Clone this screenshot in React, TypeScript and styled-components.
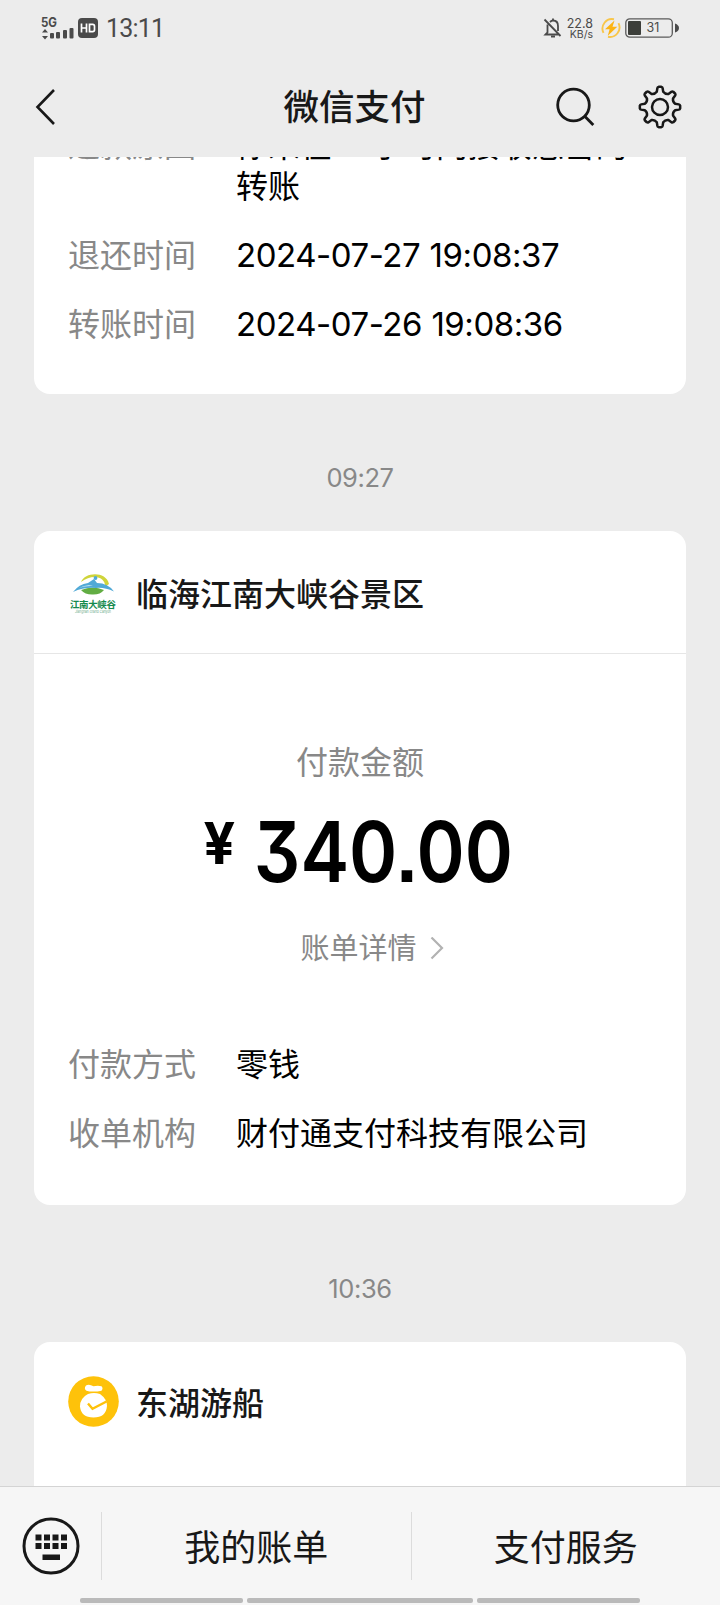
import React from "react";
import styled, { createGlobalStyle } from "styled-components";

const Global = createGlobalStyle`
  * { box-sizing: border-box; }
  html, body { margin: 0; padding: 0; background: #ececec; }
  body { font-family: Inter, "Noto Sans CJK SC", sans-serif; }
`;

const Screen = styled.div`
  width: 720px;
  height: 1605px;
  display: flex;
  flex-direction: column;
  overflow: hidden;
  background: #ececec;
`;

const StatusBar = styled.div`
  height: 56px;
  flex: none;
  display: flex;
  align-items: center;
  justify-content: space-between;
  padding: 0 40px 0 41px;
  color: #4a4a4a;
`;

const StatusGroup = styled.div`
  display: flex;
  align-items: center;
`;

const Clock = styled.span`
  margin: 2px 0 0 8px;
  font-family: Roboto, sans-serif;
  font-size: 25px;
  letter-spacing: -0.8px;
  line-height: 30px;
`;

const Speed = styled.div`
  display: flex;
  flex-direction: column;
  align-items: flex-end;
  width: 28px;
  margin: 1px 8px 0 2px;
  font: 12.5px/11px Inter, sans-serif;
  white-space: nowrap;
`;

const Unit = styled.span`
  font-size: 10.5px;
`;

const NavBar = styled.header`
  height: 101px;
  flex: none;
  display: grid;
  grid-template-columns: 200px 1fr 200px;
  align-items: center;
  padding: 0 38px 0 35px;
`;

const Title = styled.h1`
  margin: 2px 8px 0 0;
  text-align: center;
  font-size: 35.5px;
  line-height: 50px;
  font-weight: 500;
  color: #181818;
`;

const NavActions = styled.div`
  display: flex;
  justify-content: flex-end;
  align-items: center;
  gap: 43px;
`;

const Feed = styled.main`
  flex: 1;
  min-height: 0;
  overflow: hidden;
  display: flex;
  flex-direction: column;
  padding: 0 34px;
`;

const Card = styled.section<{ $height: number; $cut?: boolean }>`
  flex: none;
  height: ${(p) => p.$height}px;
  background: #fff;
  border-radius: ${(p) => (p.$cut ? "0 0 16px 16px" : "16px")};
  display: flex;
  flex-direction: column;
  overflow: hidden;
`;

const Stamp = styled.div`
  flex: none;
  height: 137px;
  display: flex;
  align-items: center;
  justify-content: center;
  padding-top: 30px;
  font-size: 25.5px;
  letter-spacing: -0.4px;
  line-height: 30px;
  color: #888;
`;

const Fields = styled.dl<{ $top: number }>`
  margin: ${(p) => p.$top}px 0 0;
  padding: 0 34px;
  display: flex;
  flex-direction: column;
  gap: 27px;
`;

const Field = styled.div<{ $wrapped?: boolean }>`
  display: grid;
  grid-template-columns: 168px 1fr;
  padding-bottom: ${(p) => (p.$wrapped ? 1 : 0)}px;
  font-size: 32px;
  line-height: ${(p) => (p.$wrapped ? 41 : 42)}px;
`;

const Label = styled.dt`
  color: #888;
`;

const Value = styled.dd`
  margin: 0;
  color: #000;
  white-space: nowrap;
`;

const DateValue = styled(Value)`
  font-size: 33px;
  line-height: 40px;
  letter-spacing: -0.45px;
  word-spacing: 0.5px;
`;

const Merchant = styled.header<{ $line?: boolean }>`
  flex: none;
  height: ${(p) => (p.$line ? 123 : 118)}px;
  display: flex;
  align-items: center;
  gap: 17px;
  padding: 0 34px;
  border-bottom: ${(p) => (p.$line ? "1px solid #e6e6e6" : "0")};
`;

const MerchantName = styled.h2`
  margin: 6px 0 0;
  font-size: 32px;
  line-height: 46px;
  font-weight: 500;
  color: #181818;
`;

const Summary = styled.div`
  flex: none;
  display: flex;
  flex-direction: column;
  align-items: center;
  padding-top: 88px;
`;

const Caption = styled.div`
  font-size: 32px;
  line-height: 42px;
  color: #888;
`;

const Amount = styled.div`
  display: flex;
  align-items: flex-start;
  gap: 23px;
  margin: 15px 2px 0 0;
  height: 105px;
  color: #000;
  font-weight: 600;
  font-feature-settings: "cv09" 1, "ss07" 1;
  transform: scaleX(0.87);
`;

const Currency = styled.span`
  font-size: 58px;
  line-height: 88px;
  font-weight: 700;
  transform: scaleX(1.1);
`;

const Figure = styled.span`
  font-size: 84px;
  line-height: 105px;
`;

const Detail = styled.div`
  display: flex;
  align-items: center;
  gap: 13px;
  margin: 24px 0 0 24px;
  font-size: 29px;
  line-height: 42px;
  color: #888;
`;

const Footer = styled.footer`
  flex: none;
  height: 119px;
  border-top: 1px solid #d4d4d4;
  background: #f6f6f6;
  display: flex;
  flex-direction: column;
`;

const Menu = styled.nav`
  height: 109px;
  display: flex;
  align-items: center;
  padding-top: 9px;
`;

const KeyboardSlot = styled.div`
  width: 101px;
  display: flex;
  justify-content: center;
`;

const MenuItem = styled.div`
  flex: 1;
  height: 68px;
  border-left: 1px solid #dcdcdc;
  display: flex;
  align-items: center;
  justify-content: center;
  padding-bottom: 2px;
  font-size: 36px;
  color: #181818;
`;

const Handles = styled.div`
  display: flex;
  justify-content: center;
  gap: 4px;
  padding: 2px 0 0;
`;

const Handle = styled.i<{ $w: number }>`
  width: ${(p) => p.$w}px;
  height: 5px;
  border-radius: 2px;
  background: #bababa;
`;

const HdBadge = styled.svg`
  margin-left: 3px;
`;

const Battery = styled.svg`
  margin-left: 4px;
`;

const SignalIcon = () => (
  <svg width="34" height="26" viewBox="0 0 34 26" fill="#4a4a4a">
    <text x="0" y="11.5" fontFamily="Inter" fontSize="12.5" fontWeight="700" textLength="16" lengthAdjust="spacingAndGlyphs">5G</text>
    <path d="M4 14l3 3.500H1zM4 24.500l3-3.500H1z" />
    <rect x="9" y="18" width="4" height="5.500" rx="1" />
    <rect x="15" y="17" width="4" height="6.500" rx="1" />
    <rect x="22" y="15" width="4" height="8.500" rx="1" />
    <rect x="28.500" y="13" width="4" height="10.500" rx="1" />
  </svg>
);

const HdIcon = () => (
  <HdBadge width="20" height="20" viewBox="0 0 20 20">
    <rect width="20" height="20" rx="4" fill="#4a4a4a" />
    <path d="M3.500 5.500v9M8.500 5.500v9M3.500 10h5M11.500 6.400v7.200h3.200q1.800 0 1.800-1.800V8.200q0-1.800-1.800-1.800z" fill="none" stroke="#fff" strokeWidth="1.700" />
  </HdBadge>
);

const MutedBell = () => (
  <svg width="20" height="20" viewBox="0 0 20 20" fill="none" stroke="#4a4a4a" strokeWidth="1.800">
    <path d="M4.500 6.500v8L2.500 16.500h14M7 4q1.500-1.500 3-1.500 5 0 5 5.500v5M10 .5v2M1.500 1.500l16 16.500" />
    <path d="M8 18.500h4" strokeWidth="2" />
  </svg>
);

const ChargeIcon = () => (
  <svg width="20" height="20" viewBox="0 0 20 20">
    <path d="M13 1.300a9.500 9.500 0 0 0-10.500 13.500M7 18.700a9.500 9.500 0 0 0 10.500-13.500" fill="none" stroke="#f8c64a" strokeWidth="1.900" />
    <path d="M13.500 2.500L4 11.200h4.600L6.800 17.800 16.300 8.800h-4.800z" fill="#fcb414" />
  </svg>
);

const BatteryIcon = () => (
  <Battery width="55" height="20" viewBox="0 0 55 20">
    <rect x=".8" y=".8" width="46.500" height="18.400" rx="4" fill="none" stroke="#5a5a5a" strokeWidth="1.300" />
    <rect x="3" y="3" width="13" height="14" rx="1" fill="#3c3e3a" />
    <path d="M50 5.500q4 1.500 4 4.500t-4 4.500z" fill="#4a4a4a" />
    <text x="28" y="14.300" textAnchor="middle" fontFamily="Inter" fontSize="12.5" fill="#4a4a4a">31</text>
  </Battery>
);

const BackIcon = () => (
  <svg width="22" height="36" viewBox="0 0 22 36" fill="none" stroke="#181818" strokeWidth="2.600">
    <path d="M19 1L2.500 18 19 35" />
  </svg>
);

const SearchIcon = () => (
  <svg width="40" height="40" viewBox="0 0 40 40" fill="none" stroke="#181818" strokeWidth="2.800">
    <circle cx="18.500" cy="18" r="15.800" />
    <path d="M29.500 29l8.800 9" />
  </svg>
);

const gearPath = (() => {
  const point = (deg: number, r: number) => {
    const a = ((deg - 90) * Math.PI) / 180;
    return `${(22 + r * Math.cos(a)).toFixed(2)} ${(22 + r * Math.sin(a)).toFixed(2)}`;
  };
  let d = "";
  for (let i = 0; i < 8; i++) {
    const c = i * 45;
    d += `${i === 0 ? "M" : "L"}${point(c - 12, 15.5)}L${point(c - 8, 19)}Q${point(c - 7, 20)} ${point(c - 4, 20.2)}L${point(c + 4, 20.2)}Q${point(c + 7, 20)} ${point(c + 8, 19)}L${point(c + 12, 15.5)}Q${point(c + 22.5, 13.6)} ${point(c + 33, 15.5)}`;
  }
  return d + "Z";
})();

const GearIcon = () => (
  <svg width="44" height="44" viewBox="0 0 44 44" fill="none" stroke="#181818" strokeWidth="2.500" strokeLinejoin="round">
    <path d={gearPath} />
    <circle cx="22" cy="22" r="8" />
  </svg>
);

const CanyonLogo = () => (
  <svg width="51" height="51" viewBox="0 0 51 51">
    <path d="M13 15C17 5 38 4 41 17L37 20C38 10 25 6 13 15z" fill="#cfd43a" />
    <path d="M13 23q12-5 23 0-4 5-12 4.500-7 0-11-4.500z" fill="#62ad43" />
    <path d="M5 25Q11 17 20 16L26 12l3 4q11 0 17 8.500-10-4.500-18-3.500-12-1-23 4z" fill="#50a9d6" />
    <path d="M11 21q8-4 14-2-8-.5-14 2z" fill="#d9f0fa" />
    <circle cx="27.500" cy="11" r="1.900" fill="#50a9d6" />
    <text x="2" y="41" fontFamily="Noto Sans CJK SC" fontWeight="600" fontSize="9.500" textLength="46" fill="#168a4e">江南大峡谷</text>
    <text x="7" y="46" fontFamily="Inter" fontSize="4" textLength="36" lengthAdjust="spacingAndGlyphs" fill="#6bab88">Jiangnan Grand Canyon</text>
  </svg>
);

const PouchLogo = () => (
  <svg width="51" height="51" viewBox="0 0 51 51">
    <circle cx="25.500" cy="25.500" r="25.300" fill="#fec20a" />
    <path d="M18 9.500q3-2 7.500.8 4.500-1 8 0 2 2 0 4.500l-4 .7h-8l-3-.7q-3-2-.5-5.300z" fill="#fff" />
    <path d="M20 18q6-2 12 0 7 5 7 12-1 11.500-13.500 11.500T12 30.500Q12 22 20 18z" fill="#fff" />
    <path d="M20 27.500l4.500 5.300L38.500 25.500" fill="none" stroke="#fec20a" strokeWidth="2.400" />
  </svg>
);

const Chevron = () => (
  <svg width="14" height="24" viewBox="0 0 14 24" fill="none" stroke="#b2b2b2" strokeWidth="2.200">
    <path d="M1.500 .5L12 11 1.500 21.500" />
  </svg>
);

const KeyboardIcon = () => (
  <svg width="58" height="58" viewBox="0 0 58 58" fill="#181818">
    <circle cx="29" cy="29" r="27" fill="none" stroke="#181818" strokeWidth="3" />
    {[13.5, 22, 30.5, 39].map((x) => (
      <React.Fragment key={x}>
        <rect x={x} y="17.500" width="6" height="6" />
        <rect x={x} y="26" width="6" height="6" />
      </React.Fragment>
    ))}
    <rect x="20.500" y="37.500" width="17.500" height="5.500" />
  </svg>
);

export default function App() {
  return (
    <Screen>
      <Global />
      <StatusBar>
        <StatusGroup>
          <SignalIcon />
          <HdIcon />
          <Clock>13:11</Clock>
        </StatusGroup>
        <StatusGroup>
          <MutedBell />
          <Speed>
            <span>22.8</span>
            <Unit>KB/s</Unit>
          </Speed>
          <ChargeIcon />
          <BatteryIcon />
        </StatusGroup>
      </StatusBar>
      <NavBar>
        <BackIcon />
        <Title>微信支付</Title>
        <NavActions>
          <SearchIcon />
          <GearIcon />
        </NavActions>
      </NavBar>
      <Feed>
        <Card $height={237} $cut>
          <Fields $top={-32}>
            <Field $wrapped>
              <Label>退款原因</Label>
              <Value>
                你未在24小时内接收悠雪的
                <br />
                转账
              </Value>
            </Field>
            <Field>
              <Label>退还时间</Label>
              <DateValue>2024-07-27 19:08:37</DateValue>
            </Field>
            <Field>
              <Label>转账时间</Label>
              <DateValue>2024-07-26 19:08:36</DateValue>
            </Field>
          </Fields>
        </Card>
        <Stamp>09:27</Stamp>
        <Card $height={674}>
          <Merchant $line>
            <CanyonLogo />
            <MerchantName>临海江南大峡谷景区</MerchantName>
          </Merchant>
          <Summary>
            <Caption>付款金额</Caption>
            <Amount>
              <Currency>¥</Currency>
              <Figure>340.00</Figure>
            </Amount>
            <Detail>
              账单详情
              <Chevron />
            </Detail>
          </Summary>
          <Fields $top={74}>
            <Field>
              <Label>付款方式</Label>
              <Value>零钱</Value>
            </Field>
            <Field>
              <Label>收单机构</Label>
              <Value>财付通支付科技有限公司</Value>
            </Field>
          </Fields>
        </Card>
        <Stamp>10:36</Stamp>
        <Card $height={200}>
          <Merchant>
            <PouchLogo />
            <MerchantName>东湖游船</MerchantName>
          </Merchant>
        </Card>
      </Feed>
      <Footer>
        <Menu>
          <KeyboardSlot>
            <KeyboardIcon />
          </KeyboardSlot>
          <MenuItem>我的账单</MenuItem>
          <MenuItem>支付服务</MenuItem>
        </Menu>
        <Handles>
          <Handle $w={163} />
          <Handle $w={226} />
          <Handle $w={163} />
        </Handles>
      </Footer>
    </Screen>
  );
}
